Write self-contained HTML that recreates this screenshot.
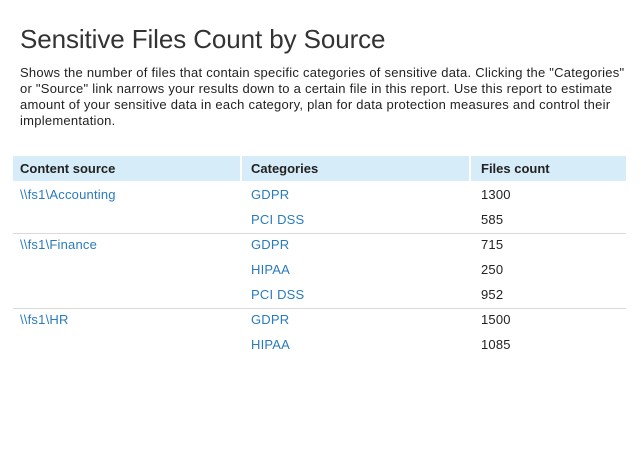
<!DOCTYPE html>
<html><head><meta charset="utf-8"><style>
body{margin:0;width:640px;height:450px;background:#fff;font-family:"Liberation Sans","DejaVu Sans",sans-serif;color:#222;position:relative;overflow:hidden}
h1{position:absolute;left:20px;top:24px;margin:0;font-weight:normal;font-size:26px;color:#333;letter-spacing:-0.1px;white-space:nowrap}
.d{position:absolute;left:20px;top:65px;font-size:13px;line-height:16px;letter-spacing:0.25px;white-space:nowrap;color:#222}
.hd{position:absolute;top:156px;height:25px;background:#d6ecf9;font-size:13px;line-height:25px;font-weight:bold;color:#222}
.t{position:absolute;font-size:13px;line-height:16px;white-space:nowrap;letter-spacing:0.2px}
.l{color:#2a7bbd}
.ln{position:absolute;left:13px;width:613px;height:1px;background:#dadada}
</style></head><body>
<h1>Sensitive Files Count by Source</h1>
<div class="d">Shows the number of files that contain specific categories of sensitive data. Clicking the "Categories"<br>or "Source" link narrows your results down to a certain file in this report. Use this report to estimate<br>amount of your sensitive data in each category, plan for data protection measures and control their<br>implementation.</div>
<div class="hd" style="left:13px;width:220px;padding-left:7px">Content source</div>
<div class="hd" style="left:242px;width:218px;padding-left:9px">Categories</div>
<div class="hd" style="left:471px;width:145px;padding-left:10px">Files count</div>

<div class="t l" style="left:20px;top:187px">\\fs1\Accounting</div>
<div class="t l" style="left:251px;top:187px">GDPR</div><div class="t" style="left:481px;top:187px">1300</div>
<div class="t l" style="left:251px;top:212px">PCI DSS</div><div class="t" style="left:481px;top:212px">585</div>
<div class="ln" style="top:233px"></div>
<div class="t l" style="left:20px;top:237px">\\fs1\Finance</div>
<div class="t l" style="left:251px;top:237px">GDPR</div><div class="t" style="left:481px;top:237px">715</div>
<div class="t l" style="left:251px;top:262px">HIPAA</div><div class="t" style="left:481px;top:262px">250</div>
<div class="t l" style="left:251px;top:287px">PCI DSS</div><div class="t" style="left:481px;top:287px">952</div>
<div class="ln" style="top:308px"></div>
<div class="t l" style="left:20px;top:312px">\\fs1\HR</div>
<div class="t l" style="left:251px;top:312px">GDPR</div><div class="t" style="left:481px;top:312px">1500</div>
<div class="t l" style="left:251px;top:337px">HIPAA</div><div class="t" style="left:481px;top:337px">1085</div>
</body></html>
